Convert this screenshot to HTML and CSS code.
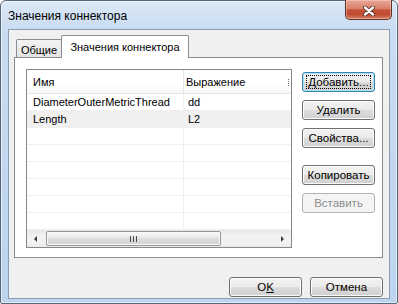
FILE: index.html
```html
<!DOCTYPE html>
<html lang="ru">
<head>
    <meta charset="UTF-8">
    <title>Значения коннектора</title>
    <link rel="stylesheet" href="styles.css">
</head>
<body>
    <div class="window">
        <!-- заголовок окна -->
        <div class="titlebar">
            <span class="title">Значения коннектора</span>
            <div class="close-btn">
                <svg width="12" height="10" viewBox="0 0 12 10">
                    <path d="M2 1.5 L10 8.5 M10 1.5 L2 8.5" stroke="#5a3028" stroke-width="4.2" stroke-linecap="round"/>
                    <path d="M2 1.5 L10 8.5 M10 1.5 L2 8.5" stroke="#ffffff" stroke-width="2.4" stroke-linecap="round"/>
                </svg>
            </div>
        </div>

        <div class="client">
            <!-- вкладки -->
            <div class="tabs">
                <div class="tab">Общие</div>
                <div class="tab active">Значения коннектора</div>
            </div>

            <div class="tab-panel">
                <div class="list">
                    <div class="list-header">
                        <div class="col name">Имя</div>
                        <div class="col expr">Выражение</div>
                        <div class="col extra"></div>
                    </div>
                    <div class="list-body">
                        <div class="row"><div class="col name">DiameterOuterMetricThread</div><div class="col expr">dd</div></div>
                        <div class="row selected"><div class="col name">Length</div><div class="col expr">L2</div></div>
                        <div class="row"><div class="col name"></div><div class="col expr"></div></div>
                        <div class="row"><div class="col name"></div><div class="col expr"></div></div>
                        <div class="row"><div class="col name"></div><div class="col expr"></div></div>
                        <div class="row"><div class="col name"></div><div class="col expr"></div></div>
                        <div class="row"><div class="col name"></div><div class="col expr"></div></div>
                        <div class="row"><div class="col name"></div><div class="col expr"></div></div>
                    </div>
                    <div class="hscroll">
                        <div class="arrow"><span class="tri left"></span></div>
                        <div class="track">
                            <div class="thumb"><span class="grip"></span></div>
                        </div>
                        <div class="arrow"><span class="tri right"></span></div>
                    </div>
                </div>

                <div class="side-buttons">
                    <button class="btn default"><span class="focus">Добавить...</span></button>
                    <button class="btn">Удалить</button>
                    <button class="btn">Свойства...</button>
                    <button class="btn group">Копировать</button>
                    <button class="btn" disabled>Вставить</button>
                </div>
            </div>

            <div class="footer">
                <button class="btn">O<u>K</u></button>
                <button class="btn">Отмена</button>
            </div>
        </div>
    </div>
</body>
</html>
```

FILE: styles.css
```css
* {
    box-sizing: border-box;
}

body {
    margin: 0;
    font-family: "Liberation Sans", "Noto Sans", sans-serif;
    font-size: 11px;
    color: #000;
    background: #ffffff;
}

.window {
    width: 398px;
    height: 304px;
    display: flex;
    flex-direction: column;
    padding: 0 7px 4px;
    border: 1px solid #56677a;
    border-radius: 6px 6px 2px 2px;
    background: linear-gradient(to bottom, #dce9f7 0px, #c9dcf1 28px, #bcd4ee 100%);
    box-shadow: inset 0 0 0 1px rgba(255, 255, 255, 0.55);
}

.titlebar {
    height: 28px;
    margin: 0 -7px;
    padding: 0 5px 0 7px;
    display: flex;
    justify-content: space-between;
    align-items: flex-start;
}

.title {
    font-size: 12px;
    line-height: 30px;
}

.close-btn {
    width: 47px;
    height: 20px;
    margin-top: -1px;
    padding-top: 2px;
    display: flex;
    justify-content: center;
    align-items: center;
    border: 1px solid #5e3329;
    border-top: none;
    border-radius: 0 0 5px 5px;
    background: linear-gradient(to bottom, #e8a898 0%, #d98068 45%, #c5513a 52%, #c24a30 75%, #d7806a 100%);
    box-shadow: inset 0 0 0 1px rgba(255, 220, 210, 0.45);
}

.client {
    flex: 1;
    display: flex;
    flex-direction: column;
    padding: 5px 6px 0 5px;
    background: #f0f0f0;
    border: 1px solid #8f9db0;
}

/* вкладки */
.tabs {
    display: flex;
    height: 23px;
    margin-bottom: -1px;
    padding-left: 2px;
    position: relative;
    z-index: 1;
}

.tab {
    width: 46px;
    height: 18px;
    margin-top: 4px;
    line-height: 20px;
    text-align: center;
    white-space: nowrap;
    border: 1px solid #898c95;
    border-bottom: none;
    border-radius: 2px 2px 0 0;
    background: linear-gradient(to bottom, #f3f3f3, #e4e4e4);
}

.tab.active {
    width: 128px;
    height: 23px;
    margin-top: 0;
    margin-left: -1px;
    line-height: 22px;
    background: #ffffff;
}

.tab-panel {
    display: flex;
    gap: 10px;
    height: 201px;
    padding: 11px 7px 0 11px;
    background: #ffffff;
    border: 1px solid #898c95;
}

/* список */
.list {
    width: 266px;
    height: 179px;
    display: flex;
    flex-direction: column;
    border: 1px solid #828790;
    background: #ffffff;
    overflow: hidden;
}

.list-header {
    display: flex;
    height: 24px;
    line-height: 25px;
    border-bottom: 1px solid #e5e5e5;
    background: linear-gradient(to bottom, #ffffff 0%, #ffffff 60%, #f7f8f9 100%);
}

.col {
    white-space: nowrap;
    overflow: hidden;
}

.col.name {
    width: 157px;
    padding-left: 6px;
    border-right: 1px solid #e5e5e5;
}

.col.expr {
    width: 104px;
    padding-left: 2px;
}

.col.extra {
    width: 3px;
    height: 7px;
    margin-top: 9px;
    border-left: 1px dotted #6d6d6d;
}

.list-body {
    flex: 1;
}

.row {
    display: flex;
    height: 17px;
    line-height: 17px;
    border-bottom: 1px solid #f0f0f0;
}

.row .col.name {
    border-right-color: #f0f0f0;
}

.row .col.expr {
    padding-left: 4px;
}

.row.selected {
    background: #f0f0f0;
}

/* горизонтальная прокрутка */
.hscroll {
    display: flex;
    height: 17px;
    background: linear-gradient(to bottom, #e6e6e6 0%, #f2f2f2 30%, #f2f2f2 80%, #e9e9e9 100%);
}

.arrow {
    width: 17px;
    display: flex;
    justify-content: center;
    align-items: center;
}

.tri {
    width: 0;
    height: 0;
    border-top: 3px solid transparent;
    border-bottom: 3px solid transparent;
}

.tri.left {
    border-right: 3px solid #3f3f3f;
}

.tri.right {
    border-left: 3px solid #3f3f3f;
}

.track {
    flex: 1;
    padding: 1px 0 1px 2px;
}

.thumb {
    width: 175px;
    height: 15px;
    display: flex;
    justify-content: center;
    align-items: center;
    border: 1px solid #959595;
    border-radius: 2px;
    background: linear-gradient(to bottom, #f6f6f6 0%, #eaeaea 45%, #dcdcdc 50%, #d4d4d4 100%);
    box-shadow: inset 0 0 0 1px #fafafa;
}

.grip {
    width: 7px;
    height: 6px;
    background: repeating-linear-gradient(to right, #4a4a4a 0px, #4a4a4a 1px, transparent 1px, transparent 3px);
}

/* кнопки */
.side-buttons {
    display: flex;
    flex-direction: column;
    padding-top: 3px;
}

.btn {
    width: 73px;
    height: 20px;
    padding: 0;
    font: inherit;
    font-size: 11.5px;
    color: #000;
    line-height: 18px;
    text-align: center;
    white-space: nowrap;
    border: 1px solid #707070;
    border-radius: 3px;
    background: linear-gradient(to bottom, #f2f2f2 0%, #ebebeb 50%, #dddddd 51%, #cfcfcf 100%);
    box-shadow: inset 0 0 0 1px #fcfcfc;
}

.side-buttons .btn {
    margin-bottom: 8px;
}

.side-buttons .btn.group {
    margin-top: 9px;
}

.btn.default {
    border-color: #3c7fb1;
    box-shadow: inset 0 0 0 1px #a9e3f9;
}

.btn .focus {
    padding: 1px 2px;
    outline: 1px dotted #000;
    outline-offset: -1px;
}

.btn:disabled {
    color: #8d8d8d;
    border-color: #adb2b5;
    background: #f4f4f4;
    box-shadow: none;
}

.footer {
    display: flex;
    justify-content: flex-end;
    gap: 8px;
    padding-top: 19px;
}
```
